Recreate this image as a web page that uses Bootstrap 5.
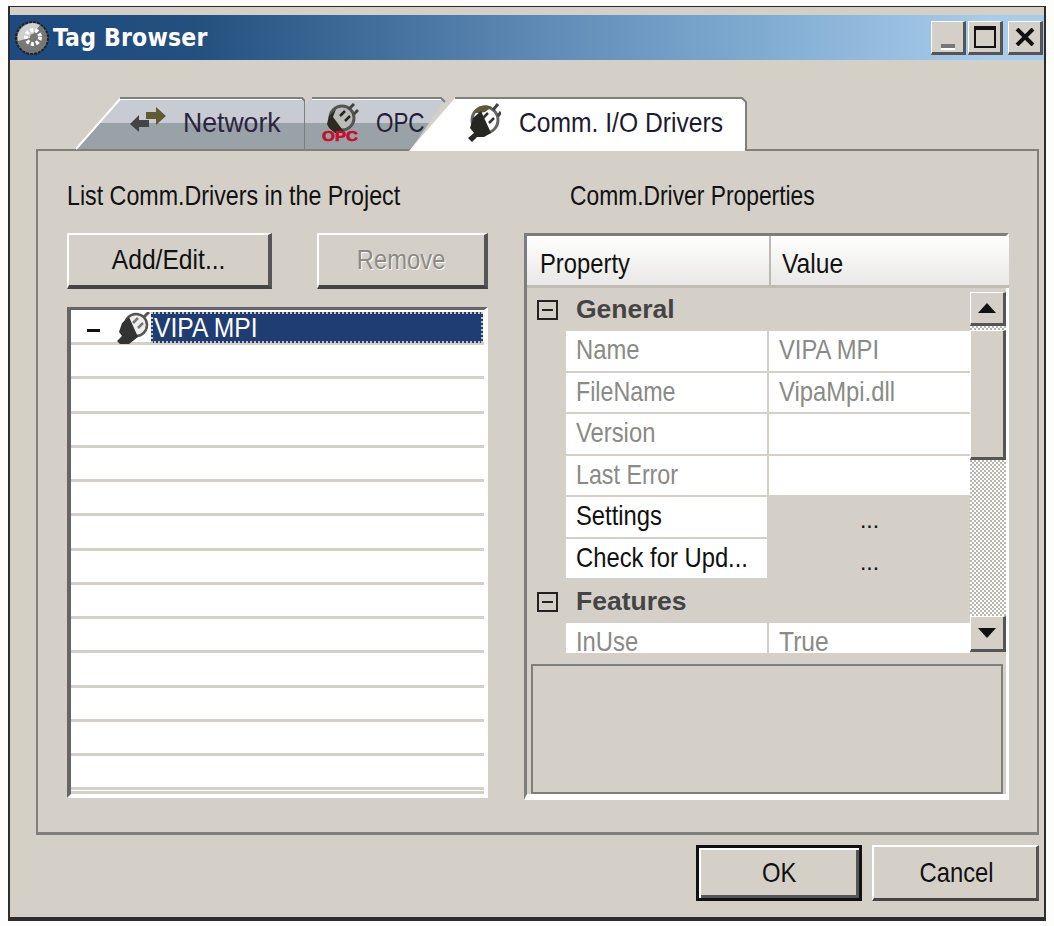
<!DOCTYPE html>
<html lang="en"><head><meta charset="utf-8"><title>Tag Browser</title>
<link href="https://cdn.jsdelivr.net/npm/bootstrap@5.3.0/dist/css/bootstrap.min.css" rel="stylesheet">
<style>
html,body{height:926px;overflow:hidden}
body{background:#fdfdfc;font-family:"Liberation Sans",sans-serif;font-size:28px;line-height:1;color:#111}
.nw{display:inline-block;white-space:nowrap;transform:scaleX(.85);transform-origin:left center}
.nw.s81{transform:scaleX(.815)}
.nw.s83{transform:scaleX(.83)}
.nw.s88{transform:scaleX(.88)}
.nw.s95{transform:scaleX(.95)}
.nw.s80{transform:scaleX(.8)}
.nw.ctr{transform-origin:center center}
.win{width:1038px;height:915px;margin:6px 0 0 8px;background:#d4d0c8;border:solid #2d2d2d;border-width:1.5px 2px 4px 2px;padding-top:8px}
.ttl{height:45px;background:linear-gradient(90deg,#1d4a80 0%,#23507f 18%,#5d88b4 50%,#7faad0 72%,#a7cdec 95%);padding:0 1px 0 4px}
.ttl-t{font:700 24.5px "DejaVu Sans Condensed","Liberation Sans",sans-serif;color:#fff;margin-left:3px;letter-spacing:.2px}
.wb{width:35px;height:34px;background:#d4d0c8;border:solid;border-color:#fff #555 #555 #fff;border-width:1px 3px 3px 1px;margin-left:2px}
.wb.last{margin-left:5px}
.mn{display:block;width:14px;height:4px;background:#777;box-shadow:0 2px 0 #fff}
.mx{display:block;width:22px;height:22px;border:2px solid #111;border-top-width:4px}
.strip{height:52px;margin:37px 0 0 66px;position:relative;z-index:2}
.tb{position:relative;height:54px;flex:none}
.tb svg.sh{position:absolute;left:0;top:0}
.tb>.in{position:relative;height:52px}
.t1{width:229px}.t2{width:141px}.t3{width:338px;margin-left:-37px}
.t1>.in{padding-left:54px}.t2>.in{padding-left:16px}.t3>.in{padding-left:58px}
.arr{margin-top:-6px}
.pnl{margin-left:26px;width:1003px;height:686px;border:solid #7f7f7b;border-width:2px 2px 3px 2px;padding:30px 0 0 29px;position:relative}
.lbl{height:30px;line-height:30px}
.cl{width:421px}.cr{width:485px;margin-left:36px}
.xb{height:56px;background:#d4d0c8;border:solid;border-color:#fff #555 #444 #fff;border-width:2px 4px 4px 2px;border-radius:0;padding:0;font-size:28px;line-height:1;color:#111}
.xb.dis{color:#8c8a85;text-shadow:1px 1px 0 #fff;opacity:1}
.btnrow{margin-top:22px}
.w205{width:205px}.w171{width:171px}
.tree{height:491px;margin-top:18px;border:solid;border-color:#666 #fff #fff #666;border-width:3px 4px 4px 4px;background:#fff;padding-top:2px;overflow:hidden}
.tr{height:34.25px;border-bottom:3px solid #d4d0c8;flex:none}
.tr1{height:33px}
.trend{height:3px;background:#d4d0c8;flex:none}
.dash{display:block;width:13px;height:3px;background:#111;margin:17px 0 0 16px}
.sel{background:#1f3d72;color:#fff;outline:2px dotted #c9c4b8;outline-offset:-2px;height:31px;line-height:31px;padding-left:3px;margin-right:1px}
.grd{height:567px;margin-top:22px;border:solid;border-color:#7d7d7d #fff #fff #7d7d7d;border-width:3px 3px 6px 3px;background:#d4d0c8;width:485px}
.gh{height:52px;flex:none;background:linear-gradient(#fff,#e9e8e6);border-bottom:3px solid #bfbcb5;line-height:56px;width:482px}
.gh>div:first-child{width:244px;padding-left:13px;border-right:2px solid #bdbab3;height:49px}
.gh>div:last-child{padding-left:11px}
.rows{width:443px;height:365px;overflow:hidden;flex:none}
.grp{height:43px;flex:none;font:700 26.5px "Liberation Sans",sans-serif;color:#444;padding-left:10px}
.grp i{display:block;width:21px;height:20px;border:2px solid #222;position:relative;margin-right:18px}
.grp i::after{content:"";position:absolute;left:3px;right:3px;top:7px;height:2px;background:#222}
.rw{height:41.5px;margin-left:39px;flex:none;line-height:38.5px}
.rw>div{height:39.5px;background:#fff;padding-left:10px;white-space:nowrap}
.rw>div:first-child{width:201px;margin-right:2px}
.rw>div:last-child{width:201px}
.dim{color:#8a8a86}
.rw>.nb{background:none;text-align:center;padding:0;line-height:46px;font-size:23px}
.sb{width:36px;height:360px;margin-top:4px;background-color:#d4d0c8;background-image:repeating-conic-gradient(#fff 0 25%,#b9b6af 0 50%);background-size:4px 4px}
.sbb{background:#d4d0c8;border:solid;border-color:#fff #555 #555 #fff;border-width:1px 3px 3px 1px;flex:none}
.h34{height:34px}.h36{height:36px}
.thumb{height:130px;margin-top:4px}
.dsc{width:472px;height:130px;margin:11px 0 0 4px;border:2px solid #7f7f7b;flex:none}
.foot{margin:10px 0 0 0;padding-left:686px}
.ok{width:166px;border:3px solid #111;box-shadow:inset 2px 2px 0 #fff,inset -3px -3px 0 #555}
.ok,.cc{height:56px;background:#d4d0c8;border-radius:0;padding:0;font-size:28px;line-height:1;color:#111}
.cc{width:167px;margin-left:10px;border:solid;border-color:#fff #555 #444 #fff;border-width:2px 3px 3px 2px;padding-left:4px}
.tnet{margin-left:17px;color:#2c2440}.topc{margin-left:17px;color:#241f38}.tcom{margin-left:18px;color:#1e1a2e}
.pl46{padding-left:46px}
</style></head><body>
<div class="win">
 <div class="ttl d-flex align-items-center">
  <svg width="36" height="38" viewBox="0 0 36 38"><circle cx="18" cy="19" r="16" fill="#777" stroke="#222" stroke-width="2" stroke-dasharray="3 1"/><path d="M4 22A15 15 0 0 1 26 6L16 19Z" fill="#eee" opacity=".75"/><circle cx="19" cy="18" r="7" fill="none" stroke="#fff" stroke-width="4" stroke-dasharray="3 2"/><circle cx="19" cy="18" r="3" fill="#777"/></svg>
  <div class="ttl-t flex-grow-1">Tag Browser</div>
  <div class="wb d-flex align-items-end justify-content-center pb-1"><span class="mn"></span></div>
  <div class="wb d-flex align-items-center justify-content-center"><span class="mx"></span></div>
  <div class="wb last d-flex align-items-center justify-content-center"><svg width="20" height="18" viewBox="0 0 20 18"><path d="M2 1L18 17M18 1L2 17" stroke="#111" stroke-width="4" fill="none"/></svg></div>
 </div>
 <div class="strip d-flex">
  <div class="tb t1">
   <svg class="sh" width="229" height="54" viewBox="0 0 229 54"><path d="M0 52L44 1H228V52Z" fill="#c8ccd2"/><path d="M0 52L24 26H228V52Z" fill="#99a3a7"/><path d="M0 52L44 2H226" fill="none" stroke="#fff" stroke-width="2"/><path d="M44 1H226L229 4V52" fill="none" stroke="#7b7f80" stroke-width="2"/></svg>
   <div class="in d-flex align-items-center">
    <svg class="arr flex-shrink-0" width="36" height="26" viewBox="0 0 36 26"><path d="M0 17L9 8V13H19V20H9V25Z" fill="#444"/><path d="M36 9L26 0V5H16V12H26V18Z" fill="#5e5a32"/></svg>
    <span class="nw s95 tnet">Network</span>
   </div>
  </div>
  <div class="tb t2">
   <svg class="sh" width="141" height="54" viewBox="0 0 141 54"><path d="M0 52V7L7 1H141L106 52Z" fill="#c8ccd2"/><path d="M0 52V26H124L106 52Z" fill="#99a3a7"/><path d="M7 2H136" fill="none" stroke="#fff" stroke-width="2"/><path d="M7 1H136L140 5" fill="none" stroke="#7b7f80" stroke-width="2"/></svg>
   <div class="in d-flex align-items-center">
    <svg class="flex-shrink-0" width="38" height="40" viewBox="0 0 38 40"><circle cx="21" cy="15" r="12" fill="#bcbcb6" stroke="#555" stroke-width="3"/><path d="M15 6L8 13L6 21L8 25L14 30H24L12 14Z" fill="#2c2a22"/><path d="M19 13L24 8M24 18L29 13" stroke="#222" stroke-width="2.5"/><path d="M28 6L33 1M33 11L37 7" stroke="#444" stroke-width="3"/><text x="1" y="38" font-family="Liberation Sans" font-weight="700" font-size="15" fill="#c4102e" stroke="#c4102e" stroke-width=".7" textLength="36" lengthAdjust="spacingAndGlyphs">OPC</text></svg>
    <span class="nw s80 topc">OPC</span>
   </div>
  </div>
  <div class="tb t3">
   <svg class="sh" width="338" height="54" viewBox="0 0 338 54"><path d="M0 54L46 1H333L337 5V54Z" fill="#fff"/><path d="M46 1H333L337 5V54" fill="none" stroke="#7f7f7b" stroke-width="2"/></svg>
   <div class="in d-flex align-items-center">
    <svg class="flex-shrink-0" width="34" height="40" viewBox="0 0 34 40"><circle cx="18" cy="17" r="13" fill="#fff" stroke="#666" stroke-width="3"/><path d="M6 10A14 14 0 0 1 25 4L18 9L12 10Z" fill="#5e5a38"/><path d="M14 8L6 15L3 25L7 30L1 35L5 39L10 34L17 34L24 30Z" fill="#262622"/><path d="M16 15L21 10M22 20L27 15" stroke="#333" stroke-width="2.5"/><path d="M26 7L31 1M31 13L34 9" stroke="#444" stroke-width="3"/></svg>
    <span class="nw s88 tcom">Comm. I/O Drivers</span>
   </div>
  </div>
 </div>
 <div class="pnl d-flex">
  <div class="cl d-flex flex-column">
   <div class="lbl"><span class="nw s83">List Comm.Drivers in the Project</span></div>
   <div class="btnrow d-flex justify-content-between">
    <button class="btn xb w205"><span class="nw s88 ctr">Add/Edit...</span></button>
    <button class="btn xb dis w171"><span class="nw ctr">Remove</span></button>
   </div>
   <div class="tree d-flex flex-column">
    <div class="tr tr1 d-flex align-items-start">
     <span class="dash"></span>
     <svg class="ms-3 flex-shrink-0" width="35" height="33" viewBox="0 0 35 33"><circle cx="20" cy="13" r="11" fill="#eeeeea" stroke="#555" stroke-width="2.5"/><path d="M13 5L6 11L3 20L6 24L1 29L4 32L13 32L22 25Z" fill="#333"/><path d="M17 11L22 6M22 16L27 11" stroke="#777" stroke-width="2.5"/><path d="M28 5L33 0" stroke="#555" stroke-width="3"/></svg>
     <div class="sel flex-grow-1"><span class="nw s88">VIPA MPI</span></div>
    </div>
    <div class="tr"></div><div class="tr"></div><div class="tr"></div><div class="tr"></div><div class="tr"></div><div class="tr"></div><div class="tr"></div><div class="tr"></div><div class="tr"></div><div class="tr"></div><div class="tr"></div><div class="tr"></div><div class="tr"></div>
    <div class="trend mt-auto"></div>
   </div>
  </div>
  <div class="cr d-flex flex-column">
   <div class="lbl pl46"><span class="nw s81">Comm.Driver Properties</span></div>
   <div class="grd d-flex flex-column">
    <div class="gh d-flex"><div><span class="nw">Property</span></div><div><span class="nw s88">Value</span></div></div>
    <div class="d-flex">
     <div class="rows d-flex flex-column">
      <div class="grp d-flex align-items-center"><i></i>General</div>
      <div class="rw d-flex dim"><div><span class="nw">Name</span></div><div><span class="nw">VIPA MPI</span></div></div>
      <div class="rw d-flex dim"><div><span class="nw s83">FileName</span></div><div><span class="nw">VipaMpi.dll</span></div></div>
      <div class="rw d-flex dim"><div><span class="nw">Version</span></div><div></div></div>
      <div class="rw d-flex dim"><div><span class="nw s83">Last Error</span></div><div></div></div>
      <div class="rw d-flex"><div><span class="nw">Settings</span></div><div class="nb">...</div></div>
      <div class="rw d-flex"><div><span class="nw">Check for Upd...</span></div><div class="nb">...</div></div>
      <div class="grp d-flex align-items-center"><i></i>Features</div>
      <div class="rw d-flex dim"><div><span class="nw">InUse</span></div><div><span class="nw s88">True</span></div></div>
     </div>
     <div class="sb d-flex flex-column justify-content-between">
      <div>
       <div class="sbb h34 d-flex align-items-center justify-content-center"><svg width="18" height="10" viewBox="0 0 18 10"><path d="M9 0L18 10H0Z" fill="#111"/></svg></div>
       <div class="sbb thumb"></div>
      </div>
      <div class="sbb h36 d-flex align-items-center justify-content-center"><svg width="18" height="10" viewBox="0 0 18 10"><path d="M0 0H18L9 10Z" fill="#111"/></svg></div>
     </div>
    </div>
    <div class="dsc"></div>
   </div>
  </div>
 </div>
 <div class="foot d-flex">
  <button class="btn ok"><span class="nw ctr">OK</span></button>
  <button class="btn cc"><span class="nw ctr">Cancel</span></button>
 </div>
</div>
<script src="https://cdn.jsdelivr.net/npm/bootstrap@5.3.0/dist/js/bootstrap.bundle.min.js"></script>
</body></html>
